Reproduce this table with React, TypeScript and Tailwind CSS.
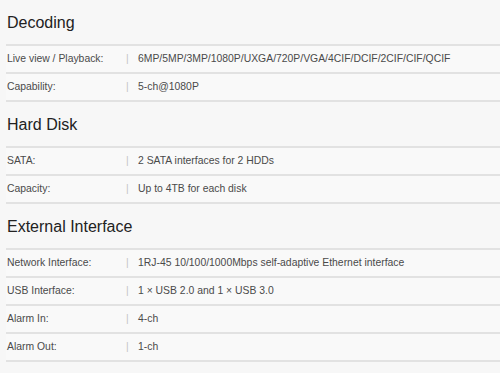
const sections = [
  {
    title: 'Decoding',
    rows: [
      ['Live view / Playback:', '6MP/5MP/3MP/1080P/UXGA/720P/VGA/4CIF/DCIF/2CIF/CIF/QCIF'],
      ['Capability:', '5-ch@1080P'],
    ],
  },
  {
    title: 'Hard Disk',
    rows: [
      ['SATA:', '2 SATA interfaces for 2 HDDs'],
      ['Capacity:', 'Up to 4TB for each disk'],
    ],
  },
  {
    title: 'External Interface',
    rows: [
      ['Network Interface:', '1RJ-45 10/100/1000Mbps self-adaptive Ethernet interface'],
      ['USB Interface:', '1 × USB 2.0 and 1 × USB 3.0'],
      ['Alarm In:', '4-ch'],
      ['Alarm Out:', '1-ch'],
    ],
  },
];

const App = () => {
  return (
    <div className="w-[500px] h-[373px] overflow-hidden bg-[#f7f7f7] pl-[6px] font-['Liberation_Sans',Arial,sans-serif]">
      {sections.map((section) => (
        <div key={section.title}>
          {/* section heading */}
          <div className="h-[46px] flex items-center pl-px pt-[2px] border-b-2 border-[#e2e2e2]">
            <h2 className="text-[16px] text-[#222]">{section.title}</h2>
          </div>

          {section.rows.map(([label, value]) => (
            <div
              key={label}
              className="h-[28px] flex items-center border-b-2 border-[#e2e2e2] text-[10.4px] text-[#4a4a4a] bg-[#f9f9f9]"
            >
              <span className="w-[120px] pl-px">{label}</span>
              <span className="w-[12px] text-[#c4c4c4]">|</span>
              <span>{value}</span>
            </div>
          ))}
        </div>
      ))}
    </div>
  );
};

export default App;
